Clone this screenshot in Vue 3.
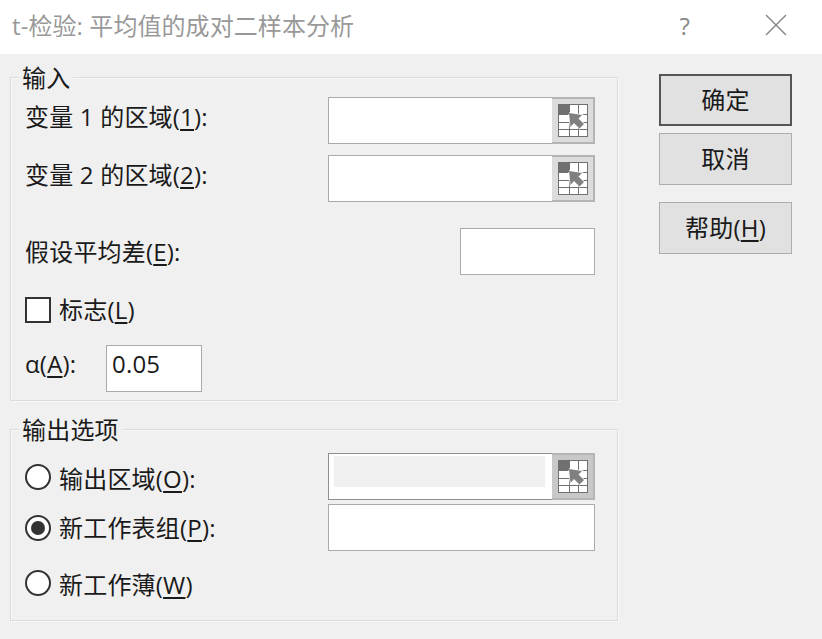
<script setup>
const gridLines = [
  'M0 .5H30', 'M0 10.5H30', 'M0 18.5H30', 'M0 25.5H30', 'M0 32.5H30',
  'M.5 0V33', 'M11.5 0V33', 'M20.5 0V33', 'M29.5 0V33',
]
</script>

<template>
  <div class="dialog">
    <header class="titlebar">
      <span class="title">t-检验: 平均值的成对二样本分析</span>
      <span class="help">?</span>
      <svg class="close" width="22" height="22" viewBox="0 0 22 22">
        <path d="M1 1L21 21M21 1L1 21" stroke="#8a8a8a" stroke-width="1.5" fill="none" />
      </svg>
    </header>

    <main class="body">
      <div class="left">
        <section class="group group-input">
          <span class="legend">输入</span>

          <div class="row row-range">
            <label>变量 1 的区域(<u>1</u>):</label>
            <div class="range">
              <span class="range-field"></span>
              <span class="range-btn">
                <svg width="30" height="33" viewBox="0 0 30 33">
                  <rect width="30" height="33" fill="#fff" />
                  <path v-for="d in gridLines" :key="d" :d="d" stroke="#707070" fill="none" />
                  <path class="arrow" d="M11 9L24 11L20.5 14.5L26 20L21.5 24.5L16 19L12.5 23Z" />
                  <rect width="11" height="10" fill="#707070" />
                </svg>
              </span>
            </div>
          </div>

          <div class="row row-range row-second">
            <label>变量 2 的区域(<u>2</u>):</label>
            <div class="range">
              <span class="range-field"></span>
              <span class="range-btn">
                <svg width="30" height="33" viewBox="0 0 30 33">
                  <rect width="30" height="33" fill="#fff" />
                  <path v-for="d in gridLines" :key="d" :d="d" stroke="#707070" fill="none" />
                  <path class="arrow" d="M11 9L24 11L20.5 14.5L26 20L21.5 24.5L16 19L12.5 23Z" />
                  <rect width="11" height="10" fill="#707070" />
                </svg>
              </span>
            </div>
          </div>

          <div class="row row-mean">
            <label>假设平均差(<u>E</u>):</label>
            <span class="field field-mean"></span>
          </div>

          <div class="row row-check">
            <span class="checkbox"></span>
            <label>标志(<u>L</u>)</label>
          </div>

          <div class="row row-alpha">
            <label>α(<u>A</u>):</label>
            <span class="field field-alpha">0.05</span>
          </div>
        </section>

        <section class="group group-output">
          <span class="legend">输出选项</span>

          <div class="output-row output-first">
            <span class="radio"></span>
            <label>输出区域(<u>O</u>):</label>
            <div class="range range-output">
              <span class="range-field"><i class="disabled-fill"></i></span>
              <span class="range-btn range-btn-off">
                <svg width="30" height="33" viewBox="0 0 30 33">
                  <rect width="30" height="33" fill="#fff" />
                  <path v-for="d in gridLines" :key="d" :d="d" stroke="#707070" fill="none" />
                  <path class="arrow" d="M11 9L24 11L20.5 14.5L26 20L21.5 24.5L16 19L12.5 23Z" />
                  <rect width="11" height="10" fill="#707070" />
                </svg>
              </span>
            </div>
          </div>

          <div class="output-row output-second">
            <span class="radio radio-on"></span>
            <label>新工作表组(<u>P</u>):</label>
            <span class="field field-sheet"></span>
          </div>

          <div class="output-row output-third">
            <span class="radio"></span>
            <label>新工作薄(<u>W</u>)</label>
          </div>
        </section>
      </div>

      <aside class="actions">
        <button class="btn btn-default">确定</button>
        <button class="btn btn-cancel">取消</button>
        <button class="btn btn-help">帮助(<u>H</u>)</button>
      </aside>
    </main>
  </div>
</template>

<style>
html, body {
  margin: 0;
  background: #f0f0f0;
}
</style>

<style scoped>
.dialog {
  width: 822px;
  height: 639px;
  display: flex;
  flex-direction: column;
  overflow: hidden;
  background: #f0f0f0;
  color: #1a1a1a;
  font-family: "Open Sans", "Noto Sans CJK SC", sans-serif;
  font-size: 24px;
  letter-spacing: .2px;
}

u {
  text-underline-offset: 3px;
  text-decoration-thickness: 2px;
}

.titlebar {
  height: 54px;
  flex: none;
  display: flex;
  align-items: center;
  padding: 0 35px 4px 12px;
  box-sizing: border-box;
  background: #fff;
  color: #999;
  letter-spacing: .08px;
}

.title {
  flex: 1;
  white-space: nowrap;
  margin-bottom: 2px;
}

.help {
  margin-right: 75px;
  color: #8a8a8a;
}

.body {
  flex: 1;
  display: flex;
  padding: 20px 30px 0 10px;
}

.left {
  width: 608px;
  flex: none;
}

.group {
  position: relative;
  box-sizing: border-box;
  margin-top: 3px;
  border: 1px solid #dcdcdc;
  box-shadow: inset 1px 1px 0 #f8f8f8, 1px 1px 0 #f8f8f8;
  padding: 19px 22px 0 14px;
}

.group-input {
  height: 324px;
}

.group-output {
  height: 192px;
  margin-top: 28px;
  padding-top: 23px;
}

.legend {
  position: absolute;
  left: 8px;
  top: -15px;
  padding: 0 3px;
  background: #f0f0f0;
  line-height: 30px;
}

.row {
  display: flex;
  align-items: center;
  justify-content: space-between;
  height: 47px;
}

.row label,
.output-row label {
  white-space: nowrap;
  margin-bottom: 4px;
}

.row-range label,
.row-alpha label {
  margin-bottom: 10px;
}

.row-mean label {
  margin-bottom: 2px;
}

.row-second {
  margin-top: 11px;
}

.row-mean {
  margin-top: 26px;
}

.row-check {
  justify-content: flex-start;
  gap: 8px;
  height: 26px;
  margin-top: 22px;
}

.row-alpha {
  justify-content: flex-start;
  margin-top: 22px;
}

.row-alpha label {
  width: 81px;
}

.range {
  width: 267px;
  height: 47px;
  display: flex;
  box-sizing: border-box;
}

.range-field {
  flex: 1;
  box-sizing: border-box;
  background: #fff;
  border: 1px solid #ababab;
  border-right: 0;
}

.range-btn {
  width: 43px;
  flex: none;
  box-sizing: border-box;
  display: flex;
  align-items: center;
  justify-content: center;
  background: #dcdcdc;
  border: 2px solid #b4b4b4;
  border-left-width: 0;
}

.range-btn-off {
  background: #c8c8c8;
}

.arrow {
  fill: #808080;
  stroke: #fff;
  stroke-width: 1.5;
  paint-order: stroke;
}

.field {
  display: block;
  box-sizing: border-box;
  height: 47px;
  background: #fff;
  border: 1px solid #ababab;
}

.field-mean {
  width: 135px;
}

.field-alpha {
  width: 96px;
  padding: 1px 5px;
  line-height: 34px;
}

.checkbox {
  width: 26px;
  height: 26px;
  flex: none;
  box-sizing: border-box;
  background: #fff;
  border: 2px solid #333;
}

.output-row {
  display: flex;
  align-items: center;
  height: 47px;
}

.output-second {
  margin-top: 4px;
}

.output-third {
  margin-top: 8px;
}

.output-row label {
  margin-left: 8px;
}

.output-first label {
  margin-bottom: 0;
  margin-top: 2px;
}

.output-second label {
  margin-bottom: 2px;
}

.output-third label {
  margin-bottom: 0;
  margin-top: 2px;
}

.radio {
  width: 26px;
  height: 26px;
  flex: none;
  box-sizing: border-box;
  border: 2px solid #333;
  border-radius: 50%;
  background: #fff;
  display: flex;
  align-items: center;
  justify-content: center;
}

.radio-on::after {
  content: "";
  width: 14px;
  height: 14px;
  border-radius: 50%;
  background: #333;
}

.range-output,
.field-sheet {
  position: absolute;
  left: 317px;
  width: 267px;
}

.range-output .range-field {
  padding: 2px 7px 2px 5px;
  border-color: #8f8f8f;
}

.disabled-fill {
  display: block;
  height: 31px;
  background: #f0f0f0;
}

.actions {
  display: flex;
  flex-direction: column;
  margin-left: 41px;
  width: 133px;
}

.btn {
  box-sizing: border-box;
  height: 52px;
  padding: 0 0 3px;
  font: inherit;
  letter-spacing: inherit;
  color: inherit;
  background: #e1e1e1;
  border: 1px solid #adadad;
}

.btn-default {
  border: 2px solid #555;
}

.btn-cancel {
  margin-top: 7px;
}

.btn-help {
  margin-top: 17px;
}
</style>
